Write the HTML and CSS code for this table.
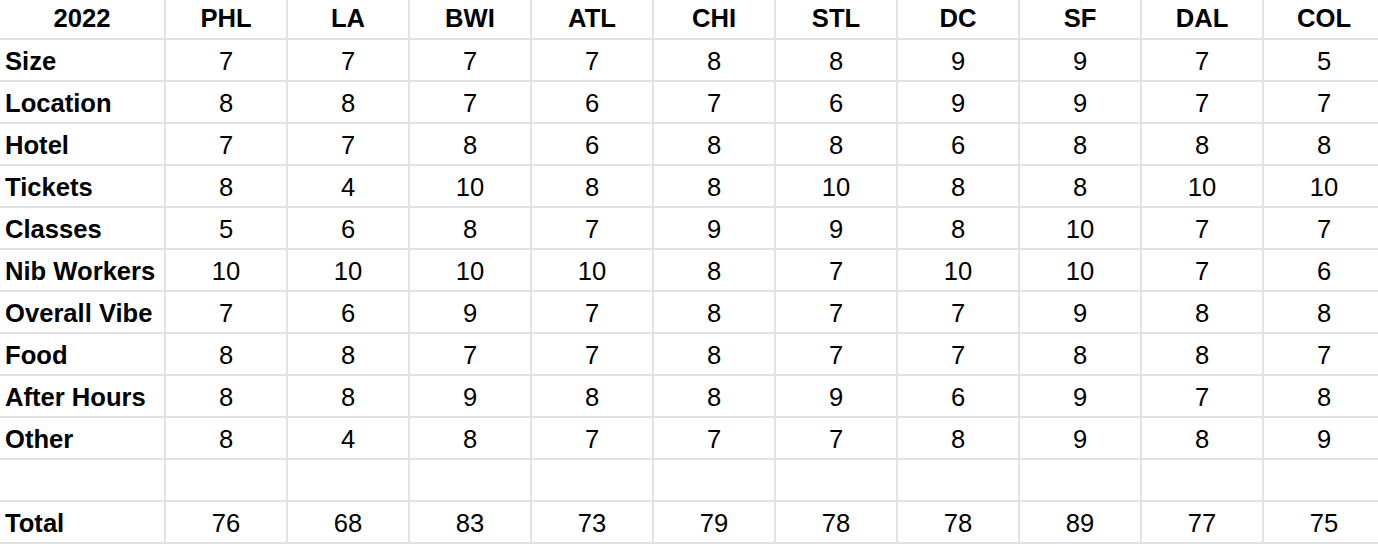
FILE: index.html
```html
<!DOCTYPE html>
<html lang="en">
<head>
<meta charset="utf-8">
<title>2022 Ratings</title>
<link rel="stylesheet" href="styles.css">
</head>
<body>
<div class="sheet">
  <div class="cell head">2022</div><div class="cell head">PHL</div><div class="cell head">LA</div><div class="cell head">BWI</div><div class="cell head">ATL</div><div class="cell head">CHI</div><div class="cell head">STL</div><div class="cell head">DC</div><div class="cell head">SF</div><div class="cell head">DAL</div><div class="cell head">COL</div>

  <div class="cell label">Size</div><div class="cell">7</div><div class="cell">7</div><div class="cell">7</div><div class="cell">7</div><div class="cell">8</div><div class="cell">8</div><div class="cell">9</div><div class="cell">9</div><div class="cell">7</div><div class="cell">5</div>

  <div class="cell label">Location</div><div class="cell">8</div><div class="cell">8</div><div class="cell">7</div><div class="cell">6</div><div class="cell">7</div><div class="cell">6</div><div class="cell">9</div><div class="cell">9</div><div class="cell">7</div><div class="cell">7</div>

  <div class="cell label">Hotel</div><div class="cell">7</div><div class="cell">7</div><div class="cell">8</div><div class="cell">6</div><div class="cell">8</div><div class="cell">8</div><div class="cell">6</div><div class="cell">8</div><div class="cell">8</div><div class="cell">8</div>

  <div class="cell label">Tickets</div><div class="cell">8</div><div class="cell">4</div><div class="cell">10</div><div class="cell">8</div><div class="cell">8</div><div class="cell">10</div><div class="cell">8</div><div class="cell">8</div><div class="cell">10</div><div class="cell">10</div>

  <div class="cell label">Classes</div><div class="cell">5</div><div class="cell">6</div><div class="cell">8</div><div class="cell">7</div><div class="cell">9</div><div class="cell">9</div><div class="cell">8</div><div class="cell">10</div><div class="cell">7</div><div class="cell">7</div>

  <div class="cell label">Nib Workers</div><div class="cell">10</div><div class="cell">10</div><div class="cell">10</div><div class="cell">10</div><div class="cell">8</div><div class="cell">7</div><div class="cell">10</div><div class="cell">10</div><div class="cell">7</div><div class="cell">6</div>

  <div class="cell label">Overall Vibe</div><div class="cell">7</div><div class="cell">6</div><div class="cell">9</div><div class="cell">7</div><div class="cell">8</div><div class="cell">7</div><div class="cell">7</div><div class="cell">9</div><div class="cell">8</div><div class="cell">8</div>

  <div class="cell label">Food</div><div class="cell">8</div><div class="cell">8</div><div class="cell">7</div><div class="cell">7</div><div class="cell">8</div><div class="cell">7</div><div class="cell">7</div><div class="cell">8</div><div class="cell">8</div><div class="cell">7</div>

  <div class="cell label">After Hours</div><div class="cell">8</div><div class="cell">8</div><div class="cell">9</div><div class="cell">8</div><div class="cell">8</div><div class="cell">9</div><div class="cell">6</div><div class="cell">9</div><div class="cell">7</div><div class="cell">8</div>

  <div class="cell label">Other</div><div class="cell">8</div><div class="cell">4</div><div class="cell">8</div><div class="cell">7</div><div class="cell">7</div><div class="cell">7</div><div class="cell">8</div><div class="cell">9</div><div class="cell">8</div><div class="cell">9</div>

  <div class="cell label"></div><div class="cell"></div><div class="cell"></div><div class="cell"></div><div class="cell"></div><div class="cell"></div><div class="cell"></div><div class="cell"></div><div class="cell"></div><div class="cell"></div><div class="cell"></div>

  <div class="cell label">Total</div><div class="cell">76</div><div class="cell">68</div><div class="cell">83</div><div class="cell">73</div><div class="cell">79</div><div class="cell">78</div><div class="cell">78</div><div class="cell">89</div><div class="cell">77</div><div class="cell">75</div>
</div>
</body>
</html>
```

FILE: styles.css
```css
html, body {
  margin: 0;
  padding: 0;
  background: #ffffff;
  overflow: hidden;
}

.sheet {
  display: grid;
  grid-template-columns: 166px repeat(10, 122px);
  grid-template-rows: 40px repeat(12, 42px);
  width: max-content;
  font-family: "Liberation Sans", Arial, sans-serif;
  font-size: 25.6px;
  color: #000000;
}

.cell {
  box-sizing: border-box;
  border-right: 2px solid #e2e2e2;
  border-bottom: 2px solid #e2e2e2;
  text-align: center;
  line-height: 42px;
  white-space: nowrap;
  overflow: hidden;
}

.head {
  font-weight: bold;
  line-height: 37px;
}

.label {
  font-weight: bold;
  text-align: left;
  padding-left: 5px;
}
```
